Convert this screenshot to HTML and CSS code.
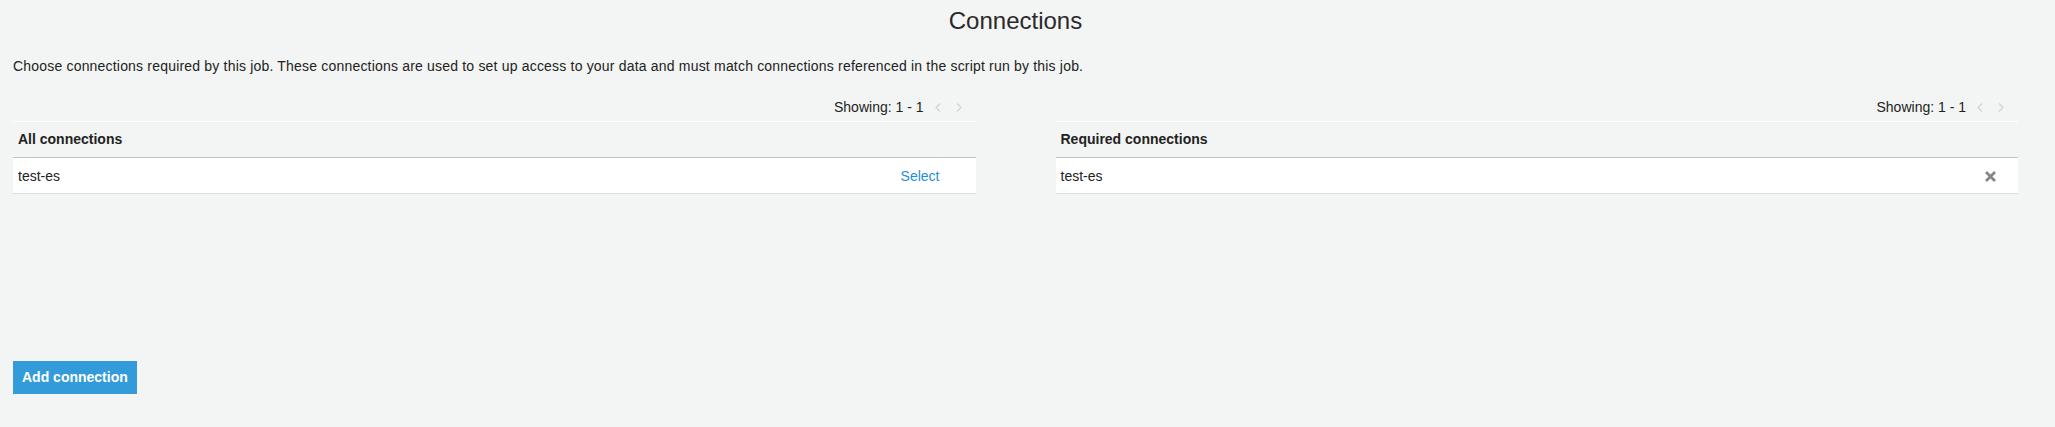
FILE: index.html
```html
<!DOCTYPE html>
<html lang="en">
<head>
<meta charset="utf-8">
<title>Connections</title>
<link rel="stylesheet" href="styles.css">
</head>
<body>
<div class="page">
  <h1 class="title">Connections</h1>
  <p class="desc">Choose connections required by this job. These connections are used to set up access to your data and must match connections referenced in the script run by this job.</p>
  <div class="columns">
    <section class="panel">
      <div class="pager">
        <span class="pager-text">Showing: 1 - 1</span>
        <span class="chev chev-prev"><svg width="6" height="9" viewBox="0 0 6 9"><path d="M5 0.5 L1 4.5 L5 8.5" fill="none" stroke="#cfd1d1" stroke-width="1.1"/></svg></span>
        <span class="chev chev-next"><svg width="6" height="9" viewBox="0 0 6 9"><path d="M1 0.5 L5 4.5 L1 8.5" fill="none" stroke="#cfd1d1" stroke-width="1.1"/></svg></span>
      </div>
      <div class="table">
        <div class="thead">All connections</div>
        <div class="trow">
          <span class="cell-name">test-es</span>
          <a class="select-link">Select</a>
        </div>
      </div>
    </section>
    <section class="panel">
      <div class="pager">
        <span class="pager-text">Showing: 1 - 1</span>
        <span class="chev chev-prev"><svg width="6" height="9" viewBox="0 0 6 9"><path d="M5 0.5 L1 4.5 L5 8.5" fill="none" stroke="#cfd1d1" stroke-width="1.1"/></svg></span>
        <span class="chev chev-next"><svg width="6" height="9" viewBox="0 0 6 9"><path d="M1 0.5 L5 4.5 L1 8.5" fill="none" stroke="#cfd1d1" stroke-width="1.1"/></svg></span>
      </div>
      <div class="table">
        <div class="thead">Required connections</div>
        <div class="trow">
          <span class="cell-name">test-es</span>
          <span class="remove"><svg width="11" height="11" viewBox="0 0 11 11"><path d="M2 2 L9 9 M9 2 L2 9" stroke="#858787" stroke-width="2.8" stroke-linecap="square"/></svg></span>
        </div>
      </div>
    </section>
  </div>
  <div class="actions">
    <button class="btn-primary">Add connection</button>
  </div>
</div>
</body>
</html>
```

FILE: styles.css
```css
html, body {
  margin: 0;
  padding: 0;
  background: #f3f5f4;
}

body {
  font-family: "Liberation Sans", Arial, Helvetica, sans-serif;
  font-size: 14px;
  color: #222;
  height: 427px;
  overflow: hidden;
}

.page {
  padding: 7px 37px 0 13px;
}

.title {
  margin: 0;
  font-size: 24px;
  font-weight: normal;
  line-height: 28px;
  text-align: center;
  color: #2a2a2a;
}

.desc {
  margin: 21px 0 0;
  line-height: 20px;
  letter-spacing: 0.19px;
  color: #222;
}

.columns {
  display: grid;
  grid-template-columns: 1fr 1fr;
  column-gap: 80px;
  margin-top: 21px;
}

.pager {
  display: flex;
  justify-content: flex-end;
  align-items: center;
  height: 20px;
  padding-right: 14px;
  margin-bottom: 4px;
  color: #222;
}

.chev {
  display: flex;
  align-items: center;
}

.chev-prev {
  margin-left: 11px;
}

.chev-next {
  margin-left: 15px;
}

.thead {
  border-top: 1px solid #ffffff;
  border-bottom: 1px solid #c4c6c6;
  padding: 7px 5px;
  line-height: 21px;
  font-weight: bold;
  color: #222;
}

.trow {
  display: flex;
  align-items: center;
  justify-content: space-between;
  background: #ffffff;
  border-bottom: 1px solid #dcdede;
  padding: 8px 36px 7px 5px;
  line-height: 20px;
}

.panel:last-child .trow {
  padding-right: 22px;
}

.select-link {
  color: #1f8fd6;
  cursor: pointer;
}

.remove {
  display: flex;
  align-items: center;
}

.actions {
  margin-top: 167px;
}

.btn-primary {
  font-family: "Liberation Sans", Arial, Helvetica, sans-serif;
  font-size: 14px;
  font-weight: bold;
  color: #ffffff;
  background: #339bd9;
  border: none;
  border-radius: 0;
  height: 33px;
  padding: 0 9px;
  line-height: 33px;
  cursor: pointer;
}
```
